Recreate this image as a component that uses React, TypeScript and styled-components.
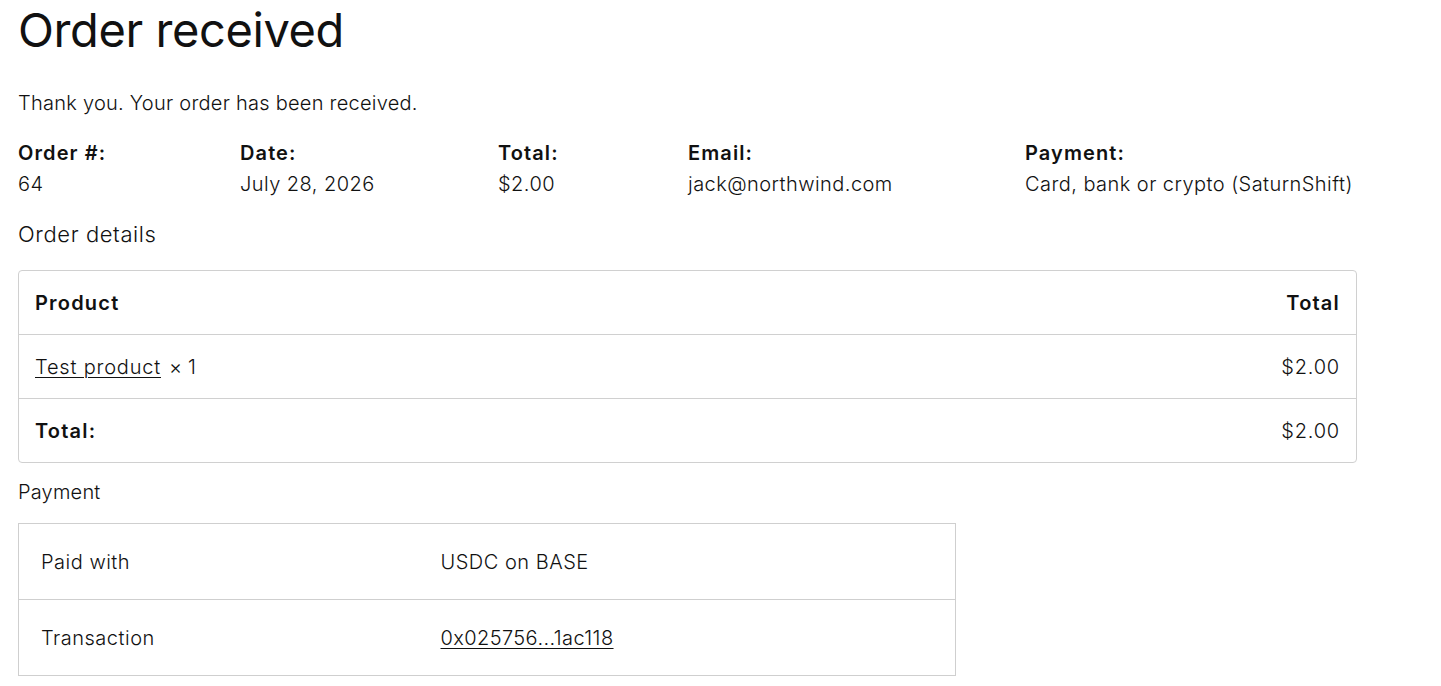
import React from "react";
import styled, { createGlobalStyle } from "styled-components";

const GlobalStyle = createGlobalStyle`
  html, body {
    margin: 0;
    padding: 0;
    background: #ffffff;
  }
  body {
    font-family: Inter, "Noto Sans", "Liberation Sans", sans-serif;
    color: #111111;
  }
`;

const Page = styled.main`
  padding: 0 18px;
  width: 1339px;
`;

const Title = styled.h1`
  margin: 0;
  padding-top: 3px;
  font-size: 47px;
  font-weight: 400;
  line-height: 54px;
  letter-spacing: -0.4px;
`;

const Notice = styled.p`
  margin: 30px 0 0;
  font-size: 20px;
  font-weight: 300;
  line-height: 32px;
  letter-spacing: 0.25px;
`;

const Overview = styled.ul`
  list-style: none;
  margin: 19px 0 0;
  padding: 0;
  display: grid;
  grid-template-columns: 222px 258px 190px 337px auto;
`;

const OverviewItem = styled.li`
  display: flex;
  flex-direction: column;
`;

const OverviewLabel = styled.span`
  font-size: 20px;
  font-weight: 600;
  line-height: 31px;
  letter-spacing: 1.1px;
`;

const OverviewValue = styled.span`
  font-size: 20px;
  font-weight: 300;
  line-height: 31px;
  letter-spacing: 0.45px;
`;

const SectionTitle = styled.h2<{ $small?: boolean }>`
  margin: ${p => (p.$small ? "14px 0 0" : "19px 0 0")};
  font-size: ${p => (p.$small ? "20px" : "22px")};
  font-weight: 300;
  line-height: 30px;
  letter-spacing: ${p => (p.$small ? "0.2px" : "0.6px")};
`;

const DetailsTable = styled.table`
  margin-top: 21px;
  width: 1339px;
  border-collapse: separate;
  border-spacing: 0;
  border: 1px solid #d0d0d0;
  border-radius: 4px;
  font-size: 20px;
`;

const DetailsCell = styled.td<{ $align?: "left" | "right"; $bold?: boolean; $last?: boolean }>`
  height: ${p => (p.$last ? "63px" : "64px")};
  padding: 0 16px;
  box-sizing: border-box;
  text-align: ${p => p.$align || "left"};
  font-weight: ${p => (p.$bold ? 600 : 300)};
  letter-spacing: ${p => (p.$bold ? "1.2px" : "0.8px")};
  border-bottom: ${p => (p.$last ? "none" : "1px solid #d0d0d0")};
  vertical-align: middle;
`;

const ProductLink = styled.a`
  color: #111111;
  text-decoration: underline;
  text-underline-offset: 3px;
  text-decoration-thickness: 1px;
`;

const Quantity = styled.span`
  margin-left: 8px;
  letter-spacing: 0.2px;
`;

const PaymentTable = styled.table`
  margin-top: 16px;
  width: 938px;
  border-collapse: collapse;
  border: 1px solid #cfcfcf;
  font-size: 20px;
`;

const PaymentCell = styled.td<{ $wide?: boolean }>`
  height: 76px;
  padding: 0 22px;
  box-sizing: border-box;
  width: ${p => (p.$wide ? "auto" : "400px")};
  font-weight: 300;
  letter-spacing: 0.5px;
  border-bottom: 1px solid #cfcfcf;
  vertical-align: middle;
`;

const TxLink = styled.a`
  color: #111111;
  letter-spacing: 0.4px;
  text-decoration: underline;
  text-underline-offset: 3px;
  text-decoration-thickness: 1px;
`;

const overview = [
  { label: "Order #:", value: "64" },
  { label: "Date:", value: "July 28, 2026" },
  { label: "Total:", value: "$2.00" },
  { label: "Email:", value: "jack@northwind.com" },
  { label: "Payment:", value: "Card, bank or crypto (SaturnShift)" },
];

export default function App() {
  return (
    <>
      <GlobalStyle />
      <Page>
        <Title>Order received</Title>
        <Notice>Thank you. Your order has been received.</Notice>

        <Overview>
          {overview.map(item => (
            <OverviewItem key={item.label}>
              <OverviewLabel>{item.label}</OverviewLabel>
              <OverviewValue>{item.value}</OverviewValue>
            </OverviewItem>
          ))}
        </Overview>

        <SectionTitle>Order details</SectionTitle>
        <DetailsTable>
          <tbody>
            <tr>
              <DetailsCell $bold>Product</DetailsCell>
              <DetailsCell $bold $align="right">Total</DetailsCell>
            </tr>
            <tr>
              <DetailsCell>
                <ProductLink href="#">Test product</ProductLink>
                <Quantity>×&nbsp;1</Quantity>
              </DetailsCell>
              <DetailsCell $align="right">$2.00</DetailsCell>
            </tr>
            <tr>
              <DetailsCell $bold $last>Total:</DetailsCell>
              <DetailsCell $align="right" $last>$2.00</DetailsCell>
            </tr>
          </tbody>
        </DetailsTable>

        <SectionTitle $small>Payment</SectionTitle>
        <PaymentTable>
          <tbody>
            <tr>
              <PaymentCell>Paid with</PaymentCell>
              <PaymentCell $wide>USDC on BASE</PaymentCell>
            </tr>
            <tr>
              <PaymentCell>Transaction</PaymentCell>
              <PaymentCell $wide>
                <TxLink href="#">0x025756...1ac118</TxLink>
              </PaymentCell>
            </tr>
          </tbody>
        </PaymentTable>
      </Page>
    </>
  );
}
